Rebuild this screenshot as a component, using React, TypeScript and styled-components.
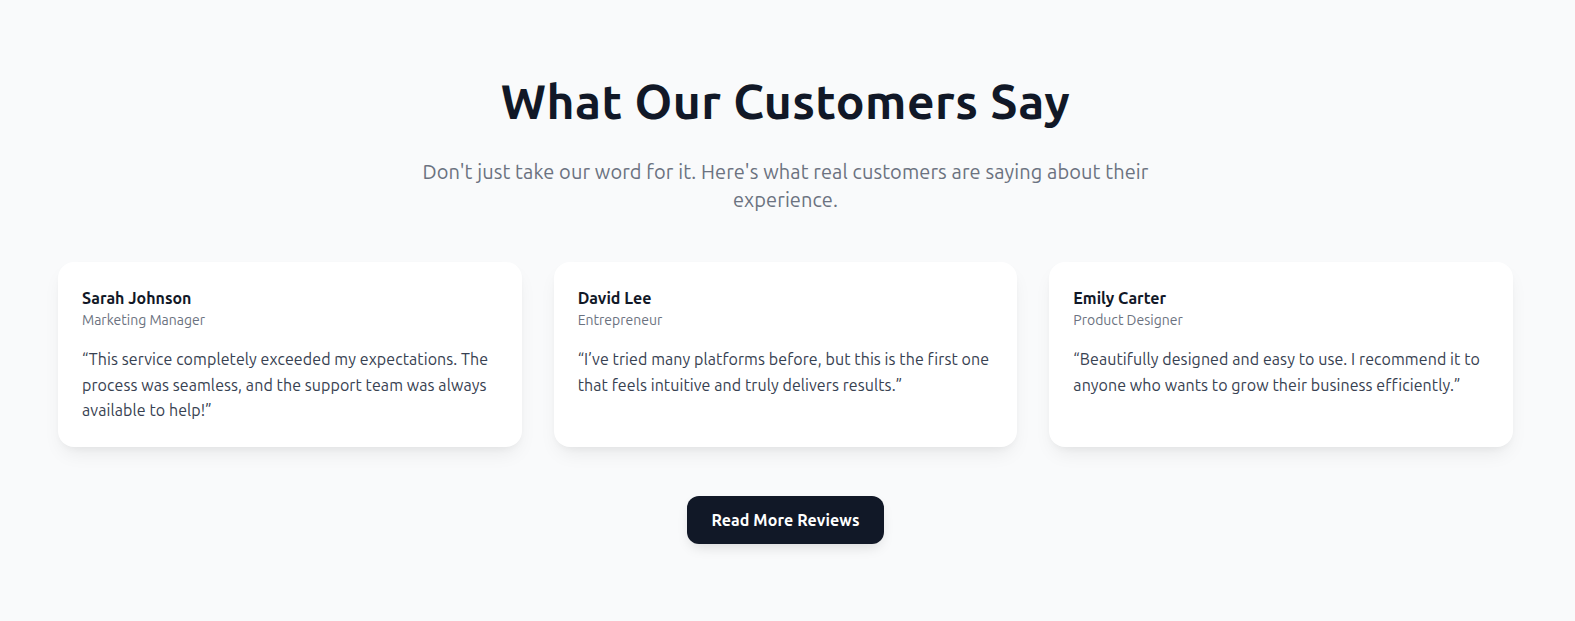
import React from "react";
import styled, { createGlobalStyle } from "styled-components";

const GlobalStyle = createGlobalStyle`
  * { box-sizing: border-box; }
  html, body { margin: 0; padding: 0; background: #f9fafb; }
  body { font-family: Ubuntu, "Noto Sans", "Open Sans", sans-serif; }
`;

const Section = styled.section`
  background: #f9fafb;
  padding: 77px 62px 78px 58px;
  display: flex;
  flex-direction: column;
  align-items: center;
`;

const Title = styled.h2`
  margin: 0;
  font-size: 48px;
  line-height: 48px;
  font-weight: 700;
  letter-spacing: 0.45px;
  color: #111827;
  text-align: center;
`;

const Subtitle = styled.p`
  margin: 33px 0 0;
  max-width: 768px;
  font-size: 20px;
  line-height: 28px;
  letter-spacing: 0.1px;
  color: #6b7280;
  text-align: center;
`;

const Grid = styled.div`
  margin-top: 48px;
  width: 100%;
  display: grid;
  grid-template-columns: repeat(3, 1fr);
  gap: 32px;
`;

const Card = styled.article`
  background: #ffffff;
  border-radius: 16px;
  padding: 24px 24px 23px;
  box-shadow: 0 10px 20px -5px rgba(0, 0, 0, 0.08), 0 4px 8px -4px rgba(0, 0, 0, 0.06);
`;

const Name = styled.h3`
  margin: 0;
  font-size: 16px;
  line-height: 24px;
  font-weight: 700;
  color: #111827;
`;

const Role = styled.p`
  margin: 0;
  font-size: 14px;
  line-height: 20px;
  color: #6b7280;
`;

const Quote = styled.p`
  margin: 17px 0 0;
  font-size: 16px;
  line-height: 25.6px;
  letter-spacing: 0.08px;
  color: #374151;
`;

const Button = styled.button`
  margin-top: 49px;
  background: #111827;
  color: #ffffff;
  border: none;
  border-radius: 12px;
  padding: 12px 24px;
  font-family: inherit;
  font-size: 16px;
  line-height: 24px;
  font-weight: 700;
  letter-spacing: 0.1px;
  cursor: pointer;
  box-shadow: 0 6px 14px -4px rgba(0, 0, 0, 0.15);
`;

const reviews = [
  {
    name: "Sarah Johnson",
    role: "Marketing Manager",
    quote:
      "\u201CThis service completely exceeded my expectations. The process was seamless, and the support team was always available to help!\u201D",
  },
  {
    name: "David Lee",
    role: "Entrepreneur",
    quote:
      "\u201CI\u2019ve tried many platforms before, but this is the first one that feels intuitive and truly delivers results.\u201D",
  },
  {
    name: "Emily Carter",
    role: "Product Designer",
    quote:
      "\u201CBeautifully designed and easy to use. I recommend it to anyone who wants to grow their business efficiently.\u201D",
  },
];

export default function App() {
  return (
    <>
      <GlobalStyle />
      <Section>
        <Title>What Our Customers Say</Title>
        <Subtitle>
          Don't just take our word for it. Here's what real customers are saying about their experience.
        </Subtitle>
        <Grid>
          {reviews.map((r) => (
            <Card key={r.name}>
              <Name>{r.name}</Name>
              <Role>{r.role}</Role>
              <Quote>{r.quote}</Quote>
            </Card>
          ))}
        </Grid>
        <Button>Read More Reviews</Button>
      </Section>
    </>
  );
}
